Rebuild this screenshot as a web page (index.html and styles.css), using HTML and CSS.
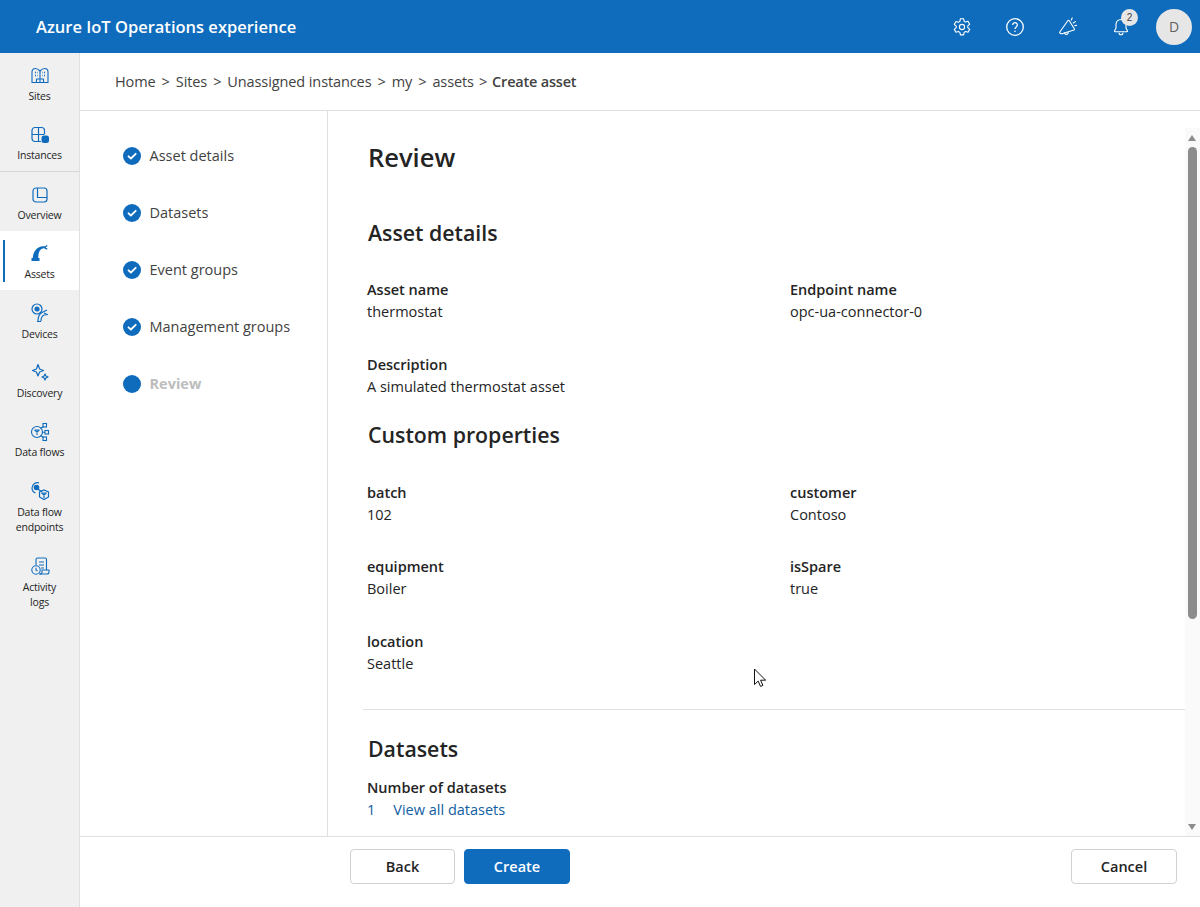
FILE: index.html
```html
<!DOCTYPE html>
<html lang="en">
<head>
<meta charset="utf-8">
<title>Azure IoT Operations experience</title>
<link rel="stylesheet" href="styles.css">
</head>
<body>
<div class="app">
  <header class="topbar">
    <div class="brand">Azure IoT Operations experience</div>
    <div class="actions">
      <button class="icon-btn" aria-label="Settings">
        <svg viewBox="0 0 20 20" width="20" height="20" fill="none" stroke="#fff" stroke-width="1.1" stroke-linejoin="round"><path d="M8.4 1.700h3.200l.5 2.500 1.500.9 2.400-.8 1.700 2.900-1.900 1.700v1.800l1.900 1.700-1.700 2.900-2.400-.8-1.500.9-.5 2.500H8.400l-.5-2.500-1.500-.9-2.400.8-1.700-2.900 1.900-1.700V9.100L2.300 7.400 4 4.500l2.400.8 1.500-.9z"/><circle cx="10" cy="10" r="2.600"/></svg>
      </button>
      <button class="icon-btn" aria-label="Help">
        <svg viewBox="0 0 20 20" width="20" height="20" fill="none" stroke="#fff"><circle cx="10" cy="10" r="8.300" stroke-width="1.300"/><path d="M7.700 8a2.300 2.300 0 1 1 3.700 1.800c-.9.700-1.400 1-1.400 2.100" stroke-width="1.300"/><circle cx="10" cy="14.300" r=".8" fill="#fff" stroke="none"/></svg>
      </button>
      <button class="icon-btn" aria-label="What's new">
        <svg viewBox="0 0 20 20" width="20" height="20" fill="none" stroke="#fff" stroke-width="1.100" stroke-linejoin="round" stroke-linecap="round"><path d="M9.800 3.700 1.800 15c-.3.500-.1 1 .4 1.200l1.200.5c.5.200 1 .1 1.300-.2l11.300-3.500c.5-.2.700-.7.300-1.200l-5-8c-.6-.6-1.300-.7-1.500-.1z"/><path d="M6.500 15.700c.1 1.300 1.500 2.100 2.700 1.500.7-.3 1.100-1 1-1.900"/><path d="M13.300 3.100l.9-2.100M15.300 6l2.200-1.400M16.700 8.700l1.800-.3"/></svg>
      </button>
      <button class="icon-btn bell" aria-label="Notifications">
        <svg viewBox="0 0 20 20" width="20" height="20" fill="none" stroke="#fff" stroke-width="1.100" stroke-linejoin="round"><path d="M10 2.500c-3 0-5 2.200-5 5v3.400l-1.500 3c-.2.400.1.800.5.800h12c.4 0 .7-.4.500-.8l-1.500-3V7.500c0-2.800-2-5-5-5z"/><path d="M8 15.800a2 2 0 0 0 4 0"/></svg>
        <span class="badge">2</span>
      </button>
      <div class="avatar">D</div>
    </div>
  </header>

  <div class="body">
    <nav class="rail">
      <a class="rail-item h59">
        <svg viewBox="0 0 20 20" width="20" height="20" fill="none" stroke="#0f6cbd" stroke-width="1.100" stroke-linejoin="round"><path d="M2 16.500V6c0-2 1.400-3.500 3.300-3.500S8.600 3.500 10 5c1.400-1.500 2.800-2.500 4.700-2.500S18 4 18 6v10.500z"/><path d="M10 5v8M6.500 16.500V13h7v3.500M10 13v3.500"/><path d="M5 6.500h1M5 9.500h1M14 6.500h1M14 9.500h1M7.500 6.500h.5M7.500 9.500h.5M12 6.500h.5M12 9.500h.5" stroke-width="1.300"/></svg>
        <span>Sites</span>
      </a>
      <a class="rail-item h59 sep">
        <svg viewBox="0 0 20 20" width="20" height="20" fill="none" stroke="#0f6cbd" stroke-width="1.200"><path d="M11 16.500H5a3 3 0 0 1-3-3v-8a3 3 0 0 1 3-3h6.500a3 3 0 0 1 3 3V9"/><path d="M8.500 2.500V16.500M2 9.500h12.500"/><rect x="11.500" y="10.500" width="7.500" height="7.500" rx="2.500" fill="#0f6cbd" stroke="none"/></svg>
        <span>Instances</span>
      </a>
      <a class="rail-item h59">
        <svg viewBox="0 0 20 20" width="20" height="20" fill="none" stroke="#0f6cbd" stroke-width="1.200"><rect x="3" y="3" width="14" height="14" rx="3"/><path d="M7.500 3v9.500H17"/></svg>
        <span>Overview</span>
      </a>
      <a class="rail-item h59 active">
        <svg viewBox="0 0 20 20" width="20" height="20" fill="#0f6cbd"><path d="M1.500 17v-3h1.300C3 7.500 7 2.600 12.800 2.200c.7 0 1.300 0 1.700.2l2.600-1.400.5 1-2 1.400 2 1.300-.6 1-2.500-1.200c-.5-.2-1-.2-1.500-.1C9.800 4.900 8.400 8.500 8.200 14h1.300v3z"/></svg>
        <span>Assets</span>
      </a>
      <a class="rail-item h60">
        <svg viewBox="0 0 20 20" width="20" height="20" fill="none" stroke="#0f6cbd" stroke-width="1.200"><circle cx="7" cy="6" r="5"/><circle cx="7" cy="6" r="2" fill="#0f6cbd"/><path d="M7 18.500h4M8 18c0-4 1-7 4-8.500l5-2.500M11 18c0-3 1-5 3-6l4-.5M14 10l2.500 1"/></svg>
        <span>Devices</span>
      </a>
      <a class="rail-item h59">
        <svg viewBox="0 0 20 20" width="20" height="20" fill="none" stroke="#0f6cbd" stroke-width="1.200" stroke-linejoin="round"><path d="M8 1.500 9.600 6l3.900 1.500L9.600 9 8 13 6.400 9 2.500 7.500 6.400 6z"/><path d="M15 11l.9 2 2.100 1-2.100 1-.9 2-.9-2-2.100-1 2.100-1z"/></svg>
        <span>Discovery</span>
      </a>
      <a class="rail-item h59">
        <svg viewBox="0 0 20 20" width="20" height="20" fill="none" stroke="#0f6cbd" stroke-width="1.100"><circle cx="7" cy="10" r="5.500"/><path d="M4.500 8h5M7 10v3M4.500 8 7 10l2.500-2"/><rect x="13" y="1.500" width="3.500" height="3.500"/><rect x="15" y="8.500" width="3.500" height="3.500"/><rect x="13" y="15" width="3.500" height="3.500"/><path d="M10.500 6.500l3-2M12.500 10.200H15M10.500 13.500l3 2"/></svg>
        <span>Data flows</span>
      </a>
      <a class="rail-item h75">
        <svg viewBox="0 0 20 20" width="20" height="20" fill="none" stroke="#0f6cbd" stroke-width="1.200"><path d="M9 1.800A5.500 5.500 0 0 0 2 7a5.500 5.500 0 0 0 3.500 5"/><circle cx="6.500" cy="6.500" r="2.200" fill="#0f6cbd"/><path d="M8 8l4 3"/><path d="M14 9l4.500 2v5L14 18.500 9.500 16v-5z"/><path d="M11.500 12h5M14 14v3M11.500 12l2.500 2 2.500-2"/></svg>
        <span>Data flow endpoints</span>
      </a>
      <a class="rail-item h75">
        <svg viewBox="0 0 20 20" width="20" height="20" fill="none" stroke="#0f6cbd" stroke-width="1.100" stroke-linejoin="round"><path d="M6 9V3.500C6 2.500 6.700 2 7.500 2H15c1 0 1.500.7 1.500 1.500V14h2.500v2c0 1.200-.8 2-2 2H9"/><path d="M16.500 14H12v2c0 1.200-.8 2-2 2"/><path d="M9 6h5M9 9h5M11 12h3"/><circle cx="6" cy="14" r="4.200"/><path d="M6 11.800V14l1.500 1"/></svg>
        <span class="narrow">Activity logs</span>
      </a>
    </nav>

    <main class="main">
      <div class="crumbs">
        <span>Home</span><i>&gt;</i><span>Sites</span><i>&gt;</i><span>Unassigned instances</span><i>&gt;</i><span>my</span><i>&gt;</i><span>assets</span><i class="last">&gt;</i><b>Create asset</b>
      </div>

      <div class="wizard">
        <ol class="steps">
          <li class="step"><span class="dot"><svg viewBox="0 0 18 18" width="18" height="18" fill="none" stroke="#fff" stroke-width="1.800" stroke-linecap="round" stroke-linejoin="round"><path d="M5.500 9.300 7.900 11.500 12.700 6.800"/></svg></span>Asset details</li>
          <li class="step"><span class="dot"><svg viewBox="0 0 18 18" width="18" height="18" fill="none" stroke="#fff" stroke-width="1.800" stroke-linecap="round" stroke-linejoin="round"><path d="M5.500 9.300 7.900 11.500 12.700 6.800"/></svg></span>Datasets</li>
          <li class="step"><span class="dot"><svg viewBox="0 0 18 18" width="18" height="18" fill="none" stroke="#fff" stroke-width="1.800" stroke-linecap="round" stroke-linejoin="round"><path d="M5.500 9.300 7.900 11.500 12.700 6.800"/></svg></span>Event groups</li>
          <li class="step"><span class="dot"><svg viewBox="0 0 18 18" width="18" height="18" fill="none" stroke="#fff" stroke-width="1.800" stroke-linecap="round" stroke-linejoin="round"><path d="M5.500 9.300 7.900 11.500 12.700 6.800"/></svg></span>Management groups</li>
          <li class="step current"><span class="dot"></span>Review</li>
        </ol>

        <section class="review">
          <h1>Review</h1>
          <h2 class="h-details">Asset details</h2>
          <div class="fields">
            <div class="field"><strong>Asset name</strong><span>thermostat</span></div>
            <div class="field"><strong>Endpoint name</strong><span>opc-ua-connector-0</span></div>
            <div class="field"><strong>Description</strong><span>A simulated thermostat asset</span></div>
          </div>
          <h2 class="h-custom">Custom properties</h2>
          <div class="fields">
            <div class="field"><strong>batch</strong><span>102</span></div>
            <div class="field"><strong>customer</strong><span>Contoso</span></div>
            <div class="field"><strong>equipment</strong><span>Boiler</span></div>
            <div class="field"><strong>isSpare</strong><span>true</span></div>
            <div class="field"><strong>location</strong><span>Seattle</span></div>
          </div>
          <hr class="rule">
          <h2 class="h-data">Datasets</h2>
          <div class="field"><strong>Number of datasets</strong><span class="link"><a>1</a><a>View all datasets</a></span></div>

          <div class="scrollbar" aria-hidden="true">
            <span class="arrow up"></span>
            <span class="thumb"></span>
            <span class="arrow down"></span>
          </div>
          <svg class="cursor" viewBox="0 0 14 20" width="14" height="20" aria-hidden="true"><path d="M1.500 1v15.500l3.700-3.400 2.300 5.300 2.400-1-2.300-5.200h5z" fill="#fff" stroke="#111" stroke-width="1"/></svg>
        </section>
      </div>

      <footer class="footer">
        <div class="footer-main">
          <button class="btn">Back</button>
          <button class="btn primary">Create</button>
        </div>
        <button class="btn wide">Cancel</button>
      </footer>
    </main>
  </div>
</div>
</body>
</html>
```
FILE: styles.css
```css
* { box-sizing: border-box; }
html, body { margin: 0; height: 100%; }
body {
  font-family: "Open Sans", "Noto Sans", "Liberation Sans", sans-serif;
  font-size: 14.500px;
  line-height: 22px;
  color: #242424;
  background: #fff;
  overflow: hidden;
}
.app { height: 907px; display: flex; flex-direction: column; }

.topbar {
  height: 53px;
  flex: none;
  background: #0f6cbd;
  color: #fff;
  display: flex;
  align-items: center;
  justify-content: space-between;
  padding: 0 8px 0 36px;
}
.brand { font-size: 16.500px; font-weight: 600; }
.actions { display: flex; align-items: center; }
.icon-btn {
  position: relative;
  width: 20px;
  height: 20px;
  padding: 0;
  margin-right: 33px;
  border: 0;
  background: none;
  display: flex;
}
.bell { margin-right: 25px; }
.badge {
  position: absolute;
  top: -8px;
  left: 10px;
  width: 17px;
  height: 17px;
  border-radius: 50%;
  background: #e6e6e6;
  color: #424242;
  font-size: 10px;
  line-height: 17px;
  text-align: center;
}
.avatar {
  width: 36px;
  height: 36px;
  border-radius: 50%;
  background: #e6e6e6;
  color: #616161;
  font-size: 14px;
  line-height: 36px;
  text-align: center;
}

.body { flex: 1; display: flex; min-height: 0; }

.rail {
  width: 80px;
  flex: none;
  background: #f0f0f0;
  border-right: 1px solid #e0e0e0;
  display: flex;
  flex-direction: column;
}
.rail-item {
  position: relative;
  display: flex;
  flex-direction: column;
  align-items: center;
  padding-top: 13px;
  font-size: 10.500px;
  line-height: 15px;
  letter-spacing: -0.2px;
  text-align: center;
  color: #242424;
}
.rail-item span { margin-top: 3px; padding: 0 8px; }
.rail-item .narrow { padding: 0 16px; }
.h59 { height: 59px; }
.h60 { height: 60px; }
.h60 span { margin-top: 4px; }
.h75 { height: 75px; }
.h75 span { margin-top: 4px; }
.sep { height: 60px; border-bottom: 1px solid #d6d6d6; }
.active { background: #fff; width: 79px; }
.active::before {
  content: "";
  position: absolute;
  left: 3px;
  top: 9px;
  width: 2px;
  height: 42px;
  background: #0f6cbd;
}

.main { flex: 1; min-width: 0; display: flex; flex-direction: column; }

.crumbs {
  height: 58px;
  flex: none;
  display: flex;
  align-items: center;
  padding: 0 0 0 35px;
  border-bottom: 1px solid #e0e0e0;
  color: #424242;
  letter-spacing: -0.1px;
}
.crumbs i { font-style: normal; margin: 0 6px; }
.crumbs .last { margin: 0 5px; }
.crumbs b { font-weight: 600; letter-spacing: -0.2px; }

.wizard { flex: 1; min-height: 0; display: flex; }

.steps {
  width: 248px;
  flex: none;
  margin: 0;
  padding: 16px 0 0 43px;
  list-style: none;
  border-right: 1px solid #e0e0e0;
  color: #424242;
}
.step { height: 57px; display: flex; align-items: center; gap: 8.500px; }
.dot {
  width: 18px;
  height: 18px;
  flex: none;
  border-radius: 50%;
  background: #0f6cbd;
  display: flex;
}
.current { color: #bdbdbd; font-weight: 700; }

.review {
  position: relative;
  flex: 1;
  min-width: 0;
  overflow: hidden;
  padding: 0 0 0 40px;
}
h1, h2 { margin: 0; font-weight: 600; color: #242424; }
h1 { font-size: 25.500px; line-height: 32px; margin-top: 30px; }
h2 { font-size: 21.300px; line-height: 28px; }
.h-details { margin-top: 46px; }
.h-custom { margin-top: 23px; }
.h-data { margin-top: 25px; }

.fields {
  display: grid;
  grid-template-columns: 423px 1fr;
  row-gap: 31px;
  margin: 32px 0 0 -1px;
}
.h-custom + .fields { margin-top: 32.500px; row-gap: 30.500px; }
.field { display: flex; flex-direction: column; }
.field strong { font-weight: 600; }
.h-data + .field { margin: 14px 0 0 -1px; }
.link { display: flex; gap: 18px; color: #115ea3; }

.rule {
  margin: 34.500px 15px 0 -5px;
  border: 0;
  border-top: 1px solid #e0e0e0;
}

.scrollbar {
  position: absolute;
  top: 17px;
  right: 0;
  width: 15px;
  bottom: 0;
  background: #fafafa;
  display: block;
}
.thumb {
  position: absolute;
  left: 3px;
  top: 19px;
  width: 9px;
  height: 472px;
  border-radius: 5px;
  background: #8c8c8c;
}
.arrow {
  position: absolute;
  left: 3px;
  border-left: 4.500px solid transparent;
  border-right: 4.500px solid transparent;
}
.up { top: 7px; border-bottom: 6px solid #8c8c8c; }
.down { bottom: 6px; border-top: 6px solid #8c8c8c; }
.cursor { position: absolute; left: 425px; top: 557px; }

.footer {
  height: 71px;
  flex: none;
  border-top: 1px solid #e0e0e0;
  display: flex;
  align-items: flex-start;
  justify-content: space-between;
  padding: 12px 23px 0 270px;
}
.footer-main { display: flex; gap: 9px; }
.btn {
  width: 105px;
  height: 35px;
  padding: 0;
  border: 1px solid #d1d1d1;
  border-radius: 4px;
  background: #fff;
  color: #242424;
  font: 600 14.500px/20px "Open Sans", "Noto Sans", sans-serif;
}
.wide { width: 106px; }
.primary { width: 106px; background: #0f6cbd; border-color: #0f6cbd; color: #fff; }
```
